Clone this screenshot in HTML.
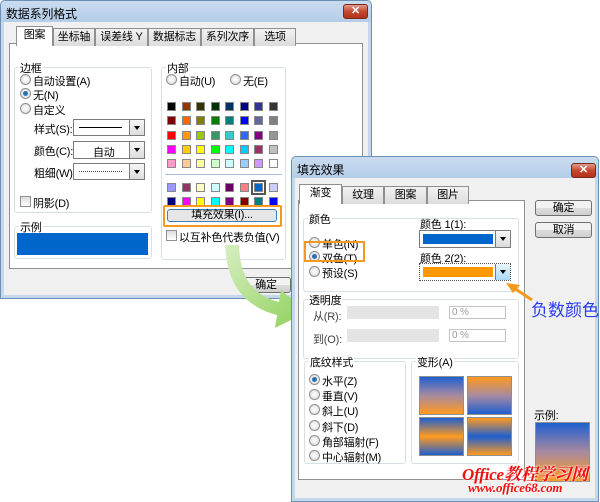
<!DOCTYPE html>
<html><head><meta charset="utf-8">
<style>
*{box-sizing:border-box;margin:0;padding:0}
body{width:600px;height:501px;background:#fff;position:relative;overflow:hidden;font:11px "Liberation Sans","Noto Sans CJK SC",sans-serif;color:#000;letter-spacing:-0.2px}
.a{position:absolute;white-space:nowrap}
.win{position:absolute;background:#f0f0f0;border:1px solid #6d8fb3;border-radius:5px 5px 0 0;box-shadow:0 0 0 3px #c4d7ec inset}
.tb{position:absolute;left:0;right:0;top:0;height:21px;background:linear-gradient(#c9dcf0,#b5cde8);border-radius:5px 5px 0 0}
.ttl{font-size:12px}
.panel{position:absolute;background:#fff;border:1px solid #8e8f8f}
.x{position:absolute;width:25px;height:15px;border-radius:3px;background:linear-gradient(#e49a8a,#c6462e 50%,#b0321c);border:1px solid #7a2a1d;color:#fff;font:bold 11px "Liberation Sans",sans-serif;text-align:center;line-height:13px}
.tab{position:absolute;height:18px;border:1px solid #8e8f8f;border-bottom:none;background:linear-gradient(#f2f2f2,#dcdcdc);text-align:center;line-height:17px}
.tab.on{background:#fff;height:20px}
.grp{position:absolute;border:1px solid #d5dfe5;border-radius:3px}
.gl{position:absolute;top:-8px;left:4px;background:#fff;padding:0 1px}
.r{position:absolute;width:11px;height:11px;border-radius:50%;border:1px solid #8e8f8f;background:radial-gradient(#fff,#d8d8d8)}
.r.on::after{content:"";position:absolute;left:2px;top:2px;width:5px;height:5px;border-radius:50%;background:#2a6fb0}
.cb{position:absolute;width:11px;height:11px;border:1px solid #8e8f8f;background:linear-gradient(#ddd,#fff)}
.sel{position:absolute;border:1px solid #7a7a7a;background:#fff}
.dd{position:absolute;right:0;top:0;bottom:0;width:15px;border-left:1px solid #7a7a7a;background:linear-gradient(#f6f6f6,#dcdcdc)}
.dd::after{content:"";position:absolute;left:4px;top:6px;border:3.5px solid transparent;border-top:4px solid #000}
.btn{position:absolute;border:1px solid #707070;border-radius:3px;background:linear-gradient(#f2f2f2 50%,#dddddd 50%,#cfcfcf);text-align:center}
.grid{position:absolute;display:grid;grid-template-columns:repeat(8,9px);column-gap:5.5px;row-gap:5.3px}
.grid div{width:9px;height:9px;border:1px solid #888}
.gp{position:absolute;border:1px solid #8e8f8f}
</style></head><body>

<div class="win" style="left:0;top:0;width:372px;height:299px">
<div class="tb"></div>
<div class="a ttl" style="left:5px;top:4px">数据系列格式</div>
<div class="x" style="left:342px;top:3px">✕</div>
<div class="panel" style="left:8px;top:42px;width:354px;height:226px"></div>
<div class="tab on" style="left:15px;top:25px;width:37px">图案</div>
<div class="tab" style="left:52px;top:27px;width:42px">坐标轴</div>
<div class="tab" style="left:94px;top:27px;width:53px">误差线 Y</div>
<div class="tab" style="left:147px;top:27px;width:53px">数据标志</div>
<div class="tab" style="left:200px;top:27px;width:53px">系列次序</div>
<div class="tab" style="left:253px;top:27px;width:42px">选项</div>

<div class="grp" style="left:13px;top:66px;width:138px;height:146px"><span class="gl">边框</span></div>
<div class="r" style="left:19px;top:73px"></div><div class="a" style="left:32px;top:72px">自动设置(A)</div>
<div class="r on" style="left:19px;top:87px"></div><div class="a" style="left:32px;top:86px">无(N)</div>
<div class="r" style="left:19px;top:102px"></div><div class="a" style="left:32px;top:101px">自定义</div>
<div class="a" style="left:33px;top:120px">样式(S):</div>
<div class="sel" style="left:72px;top:118px;width:72px;height:17px"><div style="position:absolute;left:5px;right:22px;top:7px;border-top:1px solid #000"></div><div class="dd"></div></div>
<div class="a" style="left:33px;top:142px">颜色(C):</div>
<div class="sel" style="left:72px;top:140px;width:72px;height:18px"><div class="a" style="left:19px;top:2px">自动</div><div class="dd"></div></div>
<div class="a" style="left:33px;top:164px">粗细(W):</div>
<div class="sel" style="left:72px;top:162px;width:72px;height:17px"><div style="position:absolute;left:5px;right:22px;top:7px;border-top:1px dotted #555"></div><div class="dd"></div></div>
<div class="cb" style="left:19px;top:195px"></div><div class="a" style="left:32px;top:194px">阴影(D)</div>

<div class="grp" style="left:13px;top:225px;width:138px;height:33px"><span class="gl">示例</span></div>
<div class="a" style="left:16px;top:232px;width:131px;height:22px;background:#0066cc"></div>

<div class="grp" style="left:160px;top:66px;width:125px;height:193px"><span class="gl">内部</span></div>
<div class="r" style="left:165px;top:73px"></div><div class="a" style="left:178px;top:72px">自动(U)</div>
<div class="r" style="left:229px;top:73px"></div><div class="a" style="left:242px;top:72px">无(E)</div>
<div class="grid" style="left:166px;top:101px">
<div style="background:#000"></div><div style="background:#993300"></div><div style="background:#333300"></div><div style="background:#003300"></div><div style="background:#003366"></div><div style="background:#000080"></div><div style="background:#333399"></div><div style="background:#333"></div>
<div style="background:#800000"></div><div style="background:#f60"></div><div style="background:#808000"></div><div style="background:#008000"></div><div style="background:#008080"></div><div style="background:#00f"></div><div style="background:#666699"></div><div style="background:#808080"></div>
<div style="background:#f00"></div><div style="background:#f90"></div><div style="background:#9c0"></div><div style="background:#396"></div><div style="background:#3cc"></div><div style="background:#36f"></div><div style="background:#800080"></div><div style="background:#969696"></div>
<div style="background:#f0f"></div><div style="background:#fc0"></div><div style="background:#ff0"></div><div style="background:#0f0"></div><div style="background:#0ff"></div><div style="background:#0cf"></div><div style="background:#936"></div><div style="background:#c0c0c0"></div>
<div style="background:#f9c"></div><div style="background:#fc9"></div><div style="background:#ff9"></div><div style="background:#cfc"></div><div style="background:#cff"></div><div style="background:#9cf"></div><div style="background:#c9f"></div><div style="background:#fff"></div>
</div>
<div class="a" style="left:164px;top:173px;width:117px;border-top:1px solid #a9c0dc"></div>
<div class="grid" style="left:166px;top:182px">
<div style="background:#99f"></div><div style="background:#936"></div><div style="background:#ffc"></div><div style="background:#cff"></div><div style="background:#606"></div><div style="background:#ff8080"></div><div style="background:#06c;outline:2px solid #555;outline-offset:1px"></div><div style="background:#ccf"></div>
<div style="background:#000080"></div><div style="background:#f0f"></div><div style="background:#ff0"></div><div style="background:#0ff"></div><div style="background:#800080"></div><div style="background:#800000"></div><div style="background:#008080"></div><div style="background:#00f"></div>
</div>
<div class="a" style="left:162px;top:204px;width:119px;height:22px;border:2px solid #f39a1e;border-radius:2px"></div>
<div class="btn" style="left:166px;top:208px;width:110px;height:13px;line-height:11px;border-color:#3c7fb1;background:#e6e6e6">填充效果(I)...</div>
<div class="cb" style="left:165px;top:229px"></div><div class="a" style="left:178px;top:228px">以互补色代表负值(V)</div>
<div class="btn" style="left:240px;top:276px;width:50px;height:16px;line-height:14px">确定</div>
</div>

<svg class="a" style="left:215px;top:240px" width="110" height="100" viewBox="0 0 110 100">
<defs><linearGradient id="g" x1="0" y1="0" x2="1" y2="1"><stop offset="0" stop-color="#d6eec0"/><stop offset="1" stop-color="#8fd05a"/></linearGradient></defs>
<path d="M10 5 C 12 40, 25 65, 62 75 L 60 88 L 92 72 L 66 50 L 64 62 C 35 54, 25 35, 24 5 Z" fill="url(#g)"/>
</svg>

<div class="win" style="left:291px;top:156px;width:308px;height:346px">
<div class="tb"></div>
<div class="a ttl" style="left:5px;top:4px">填充效果</div>
<div class="x" style="left:279px;top:6px">✕</div>
<div class="panel" style="left:6px;top:43px;width:227px;height:280px"></div>
<div class="tab on" style="left:7px;top:27px;width:43px">渐变</div>
<div class="tab" style="left:50px;top:29px;width:42px">纹理</div>
<div class="tab" style="left:92px;top:29px;width:43px">图案</div>
<div class="tab" style="left:135px;top:29px;width:42px">图片</div>
<div class="btn" style="left:243px;top:43px;width:57px;height:16px;line-height:14px">确定</div>
<div class="btn" style="left:243px;top:65px;width:57px;height:16px;line-height:14px">取消</div>

<div class="grp" style="left:11px;top:61px;width:216px;height:74px"><span class="gl">颜色</span></div>
<div class="r" style="left:17px;top:80px"></div><div class="a" style="left:30px;top:79px">单色(N)</div>
<div class="r on" style="left:17px;top:94px"></div><div class="a" style="left:30px;top:93px">双色(T)</div>
<div class="r" style="left:17px;top:109px"></div><div class="a" style="left:30px;top:108px">预设(S)</div>
<div class="a" style="left:12px;top:84px;width:61px;height:21px;border:2px solid #f39a1e"></div>
<div class="a" style="left:128px;top:59px">颜色 1(1):</div>
<div class="sel" style="left:127px;top:73px;width:92px;height:18px"><div class="a" style="left:3px;top:3px;width:70px;height:10px;background:#0066cc"></div><div class="dd"></div></div>
<div class="a" style="left:128px;top:93px">颜色 2(2):</div>
<div class="sel" style="left:127px;top:106px;width:92px;height:18px;border:1px dotted #555"><div class="a" style="left:3px;top:3px;width:70px;height:10px;background:#ff9900"></div><div class="dd" style="background:linear-gradient(#eaf6fd,#a7d9f5)"></div></div>

<div class="grp" style="left:11px;top:142px;width:216px;height:60px"><span class="gl">透明度</span></div>
<div class="a" style="left:21px;top:151px;color:#444">从(R):</div>
<div class="a" style="left:55px;top:149px;width:92px;height:13px;background:#e4e4e4"></div>
<div class="a" style="left:157px;top:149px;width:57px;height:13px;background:#fff;border:1px solid #c3c3c3;color:#999;font-size:10px;padding-left:2px">0 %</div>
<div class="a" style="left:21px;top:174px;color:#444">到(O):</div>
<div class="a" style="left:55px;top:172px;width:92px;height:13px;background:#e4e4e4"></div>
<div class="a" style="left:157px;top:172px;width:57px;height:13px;background:#fff;border:1px solid #c3c3c3;color:#999;font-size:10px;padding-left:2px">0 %</div>

<div class="grp" style="left:12px;top:204px;width:102px;height:103px"><span class="gl">底纹样式</span></div>
<div class="r on" style="left:17px;top:217px"></div><div class="a" style="left:30px;top:216px">水平(Z)</div>
<div class="r" style="left:17px;top:232px"></div><div class="a" style="left:30px;top:231px">垂直(V)</div>
<div class="r" style="left:17px;top:247px"></div><div class="a" style="left:30px;top:246px">斜上(U)</div>
<div class="r" style="left:17px;top:263px"></div><div class="a" style="left:30px;top:262px">斜下(D)</div>
<div class="r" style="left:17px;top:278px"></div><div class="a" style="left:30px;top:277px">角部辐射(F)</div>
<div class="r" style="left:17px;top:293px"></div><div class="a" style="left:30px;top:292px">中心辐射(M)</div>

<div class="grp" style="left:119px;top:204px;width:108px;height:103px"><span class="gl">变形(A)</span></div>
<div class="gp" style="left:127px;top:219px;width:45px;height:39px;background:linear-gradient(#1f5fd0,#a88aa0 50%,#ff9a1e)"></div>
<div class="gp" style="left:175px;top:219px;width:45px;height:39px;background:linear-gradient(#ff9a1e,#a88aa0 50%,#1f5fd0)"></div>
<div class="gp" style="left:127px;top:260px;width:45px;height:39px;background:linear-gradient(#1f5fd0,#ff9a1e 50%,#1f5fd0)"></div>
<div class="gp" style="left:175px;top:260px;width:45px;height:39px;background:linear-gradient(#ff9a1e,#1f5fd0 50%,#ff9a1e)"></div>

<div class="a" style="left:242px;top:250px">示例:</div>
<div class="gp" style="left:243px;top:265px;width:55px;height:60px;background:linear-gradient(#1f5fd0,#a88aa0 50%,#ff9a1e)"></div>
</div>

<svg class="a" style="left:500px;top:278px" width="40" height="30"><path d="M32 22 L14 10" stroke="#f39a1e" stroke-width="3"/><path d="M6 5 L20 7 L13 15 Z" fill="#f39a1e"/></svg>
<div class="a" style="left:531px;top:296px;color:#2a3cf0;font-size:17px;letter-spacing:0">负数颜色</div>

<div class="a" style="left:462px;top:460px;color:#f01010;font:italic bold 17px 'Liberation Serif','Noto Serif CJK SC',serif;text-shadow:0 0 2px #fff,0 0 2px #fff">Office教程学习网</div>
<div class="a" style="left:468px;top:480px;color:#f01010;font:italic bold 13px 'Liberation Serif',serif;text-shadow:0 0 2px #fff">www.office68.com</div>
</body></html>
